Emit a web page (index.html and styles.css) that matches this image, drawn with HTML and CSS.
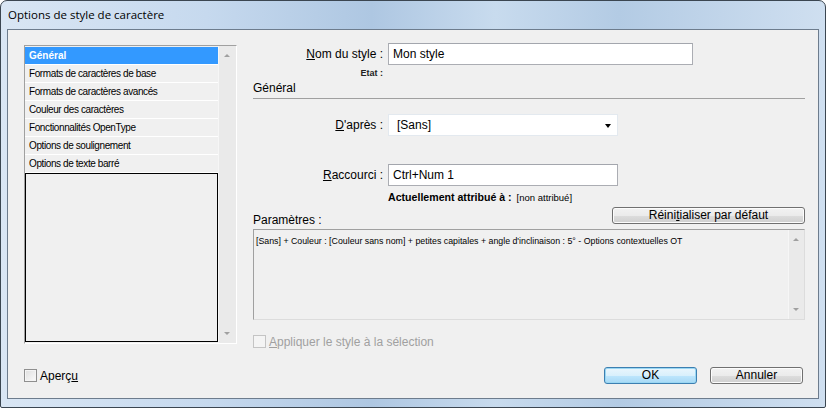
FILE: index.html
```html
<!DOCTYPE html>
<html lang="fr">

<head>
    <meta charset="UTF-8">
    <title>Options de style de caractère</title>
    <link rel="stylesheet" href="styles.css">
</head>

<body>
    <div class="window">
        <div class="titlebar">Options de style de caractère</div>

        <div class="client">
            <div class="main">
                <div class="categories">
                    <div class="cat-items">
                        <div class="cat selected">Général</div>
                        <div class="cat">Formats de caractères de base</div>
                        <div class="cat">Formats de caractères avancés</div>
                        <div class="cat">Couleur des caractères</div>
                        <div class="cat">Fonctionnalités OpenType</div>
                        <div class="cat">Options de soulignement</div>
                        <div class="cat">Options de texte barré</div>
                        <div class="cat-empty"></div>
                    </div>
                    <div class="scrollbar">
                        <span class="arrow-up"></span>
                        <span class="arrow-down"></span>
                    </div>
                </div>

                <div class="panel">
                    <div class="field">
                        <label class="label"><u>N</u>om du style :</label>
                        <div class="textbox wide">Mon style</div>
                    </div>
                    <div class="state">Etat :</div>

                    <div class="section">Général</div>

                    <div class="field after">
                        <label class="label"><u>D</u>'après :</label>
                        <div class="combo">[Sans]<span class="combo-arrow"></span></div>
                    </div>

                    <div class="field shortcut">
                        <label class="label"><u>R</u>accourci :</label>
                        <div class="textbox">Ctrl+Num 1</div>
                    </div>
                    <div class="assigned">
                        <b>Actuellement attribué à :</b>
                        <span>[non attribué]</span>
                    </div>

                    <div class="params-head">
                        <span class="params-label">Paramètres :</span>
                        <button class="btn reset">Réini<u>t</u>ialiser par défaut</button>
                    </div>
                    <div class="params">
                        <div class="params-text">[Sans] + Couleur : [Couleur sans nom] + petites capitales + angle d'inclinaison : 5° - Options contextuelles OT</div>
                        <div class="scrollbar">
                            <span class="arrow-up"></span>
                            <span class="arrow-down"></span>
                        </div>
                    </div>

                    <div class="check disabled">
                        <span class="box"></span>
                        <span><u>A</u>ppliquer le style à la sélection</span>
                    </div>
                </div>
            </div>

            <div class="footer">
                <div class="check">
                    <span class="box"></span>
                    <span>Aperç<u>u</u></span>
                </div>
                <div class="buttons">
                    <button class="btn default">OK</button>
                    <button class="btn">Annuler</button>
                </div>
            </div>
        </div>
    </div>
</body>

</html>
```

FILE: styles.css
```css
body {
    margin: 0;
    background: #fff;
}

.window {
    width: 826px;
    height: 408px;
    box-sizing: border-box;
    display: flex;
    flex-direction: column;
    border: 1px solid #3b4651;
    border-radius: 7px 7px 2px 2px;
    background: linear-gradient(90deg, #d9e6f4 0%, #c6d9ee 25%, #aec7e2 45%, #c8dbee 60%, #b3cbe4 75%, #cfdff0 100%);
    font-family: "Liberation Sans", Arial, sans-serif;
    color: #000;
}

.titlebar {
    height: 28px;
    line-height: 28px;
    padding-left: 7px;
    font-family: "Open Sans", sans-serif;
    font-size: 11.5px;
}

.client {
    flex: 1;
    display: flex;
    flex-direction: column;
    margin: 0 6px 8px 6px;
    border: 1px solid #6d7c8d;
    background: #f0f0f0;
}

.main {
    display: flex;
    padding: 13px 0 0 16px;
}

/* category list */
.categories {
    width: 213px;
    height: 299px;
    box-sizing: border-box;
    margin-top: 2px;
    display: flex;
    border: 1px solid;
    border-color: #a0a0a0 #fff #fff #a0a0a0;
    font-size: 10px;
    letter-spacing: -0.4px;
}

.cat-items {
    flex: 1;
    display: flex;
    flex-direction: column;
    padding-top: 1px;
}

.cat {
    height: 17px;
    line-height: 17px;
    padding-left: 4px;
    border-bottom: 1px solid #fff;
    white-space: nowrap;
}

.cat.selected {
    background: #3399ff;
    color: #fff;
    font-weight: bold;
    letter-spacing: 0;
}

.cat-empty {
    flex: 1;
    margin-bottom: 1px;
    border: 1px solid #000;
}

.scrollbar {
    width: 17px;
    position: relative;
    background: #eaeaea;
    border-left: 1px solid #f6f6f6;
}

.arrow-up,
.arrow-down {
    position: absolute;
    left: 5px;
    width: 0;
    height: 0;
    border-left: 3px solid transparent;
    border-right: 3px solid transparent;
}

.arrow-up {
    top: 8px;
    border-bottom: 3px solid #a0a0a0;
}

.arrow-down {
    bottom: 8px;
    border-top: 3px solid #a0a0a0;
}

/* right side */
.panel {
    width: 552px;
    margin-left: 16px;
    display: flex;
    flex-direction: column;
    font-size: 12px;
}

.field {
    display: flex;
    align-items: center;
    height: 22px;
}

.label {
    width: 130px;
    padding-right: 5px;
    text-align: right;
}

.textbox,
.combo {
    width: 230px;
    height: 22px;
    box-sizing: border-box;
    padding: 0 4px;
    line-height: 20px;
    background: #fff;
    border: 1px solid #abadb3;
    border-top-color: #a3a6ad;
}

.textbox.wide {
    width: 305px;
}

.combo {
    position: relative;
    padding-left: 8px;
    border-color: #e3e9ef;
}

.combo-arrow {
    position: absolute;
    right: 6px;
    top: 9px;
    border-left: 3.5px solid transparent;
    border-right: 3.5px solid transparent;
    border-top: 4px solid #000;
}

.state {
    height: 12px;
    line-height: 12px;
    margin-top: 2px;
    width: 130px;
    text-align: right;
    font-size: 9px;
    font-weight: bold;
    color: #222;
}

.section {
    margin-top: 3px;
    line-height: 13px;
    padding-bottom: 3px;
    border-bottom: 1px solid #a0a0a0;
}

.after {
    margin-top: 15px;
}

.shortcut {
    margin-top: 28px;
}

.assigned {
    margin-top: 5px;
    padding-left: 135px;
    height: 12px;
    line-height: 12px;
    font-size: 10.6px;
}

.assigned span {
    margin-left: 2px;
    font-size: 9.5px;
}

.params-head {
    margin-top: 4px;
    display: flex;
    justify-content: space-between;
    align-items: flex-end;
}

.params-label {
    line-height: 14px;
    margin-bottom: -3px;
}

.btn {
    width: 193px;
    height: 17px;
    padding: 0;
    border: 1px solid #707070;
    border-radius: 3px;
    background: linear-gradient(#f2f2f2 0%, #ebebeb 50%, #dddddd 51%, #cfcfcf 100%);
    box-shadow: inset 0 0 0 1px #fcfcfc;
    font-family: "Liberation Sans", Arial, sans-serif;
    font-size: 12px;
    line-height: 15px;
    color: #000;
}

.params {
    margin-top: 5px;
    height: 91px;
    box-sizing: border-box;
    display: flex;
    border: 1px solid #a0a0a0;
    border-right-color: #dcdcdc;
    border-bottom-color: #dcdcdc;
}

.params-text {
    flex: 1;
    padding: 5px 2px;
    font-size: 8.8px;
    line-height: 12px;
}

.params .scrollbar {
    width: 15px;
}

.params .arrow-up,
.params .arrow-down {
    left: 4px;
}

.check {
    display: flex;
    align-items: center;
    gap: 3px;
}

.box {
    width: 13px;
    height: 13px;
    box-sizing: border-box;
    border: 1px solid #8f8f8f;
    background: linear-gradient(135deg, #dedede, #fbfbfb);
    box-shadow: inset 0 0 0 1px #f4f4f4;
}

.panel .check {
    margin-top: 15px;
    height: 13px;
}

.check.disabled {
    color: #a0a0a0;
}

.check.disabled .box {
    border-color: #c4c4c4;
    background: #f4f4f4;
}

.footer {
    margin-top: auto;
    display: flex;
    justify-content: space-between;
    align-items: center;
    padding: 0 15px 14px 16px;
    font-size: 12px;
}

.buttons {
    display: flex;
    gap: 13px;
}

.buttons .btn {
    width: 93px;
}

.btn.default {
    border-color: #3c7fb1;
    box-shadow: inset 0 0 0 1px #9ad7f3;
    background: linear-gradient(#eaf6fd 0%, #d9f0fc 50%, #bee6fd 51%, #a7d9f5 100%);
}
```
